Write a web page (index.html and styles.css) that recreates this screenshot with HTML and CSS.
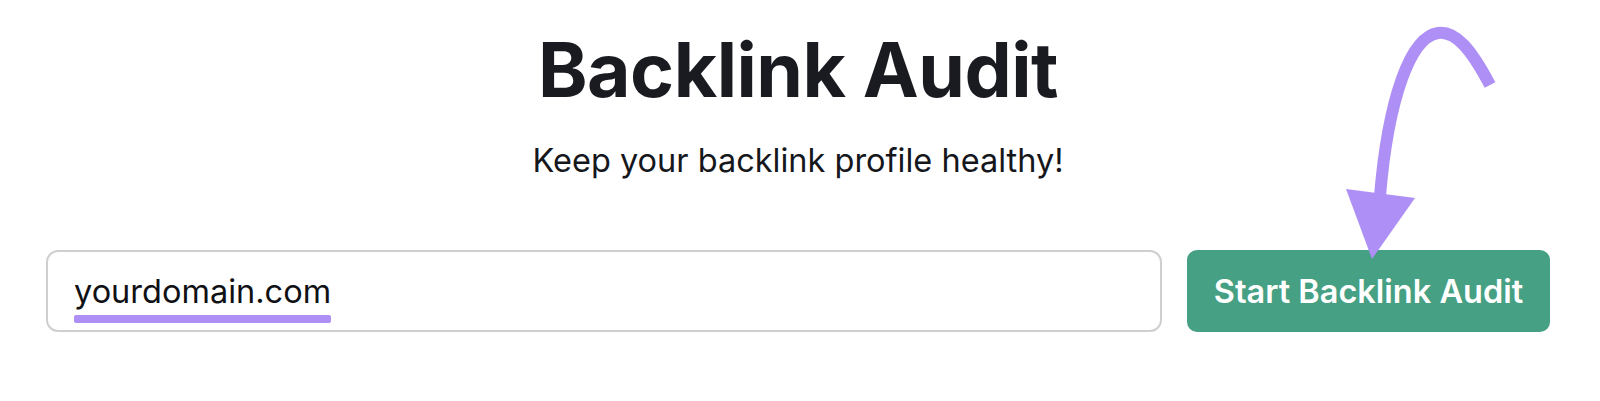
FILE: index.html
```html
<!DOCTYPE html>
<html lang="en">
<head>
<meta charset="utf-8">
<title>Backlink Audit</title>
<link rel="stylesheet" href="styles.css">
</head>
<body>
<main class="page">
  <h1 class="title">Backlink Audit</h1>
  <p class="subtitle">Keep your backlink profile healthy!</p>
  <div class="form-row">
    <div class="field">
      <div class="value">
        <span class="value-text">yourdomain.com</span>
        <span class="value-mark"></span>
      </div>
    </div>
    <button class="btn" type="button">Start Backlink Audit</button>
  </div>
  <svg class="arrow" width="1600" height="401" viewBox="0 0 1600 401" aria-hidden="true">
    <path d="M1490 85 C1471 49 1456 31 1438 33 C1410 37 1388 100 1380 196" fill="none" stroke="#ae8ff5" stroke-width="12" stroke-linecap="butt"/>
    <polygon points="1346,189 1415,198 1372,259" fill="#ae8ff5"/>
  </svg>
</main>
</body>
</html>
```
FILE: styles.css
```css
* { box-sizing: border-box; }
html, body { margin: 0; padding: 0; background: #ffffff; }
body {
  font-family: Inter, "Noto Sans", "Liberation Sans", sans-serif;
  color: #181a1f;
  width: 1600px;
  height: 401px;
  overflow: hidden;
}
.page {
  position: relative;
  display: flex;
  flex-direction: column;
  align-items: center;
  padding: 32px 50px 0 46px;
  height: 401px;
}
.title {
  margin: 0;
  font-size: 75px;
  line-height: 75px;
  font-weight: 700;
  letter-spacing: -0.5px;
  color: #191b21;
}
.subtitle {
  margin: 39px 0 0 0;
  font-size: 32.5px;
  line-height: 30px;
  font-weight: 400;
  color: #15171c;
}
.form-row {
  align-self: stretch;
  display: flex;
  gap: 25px;
  margin-top: 74px;
  height: 82px;
}
.field {
  flex: 1;
  border: 2px solid #cfcfd2;
  border-radius: 12px;
  display: flex;
  align-items: flex-start;
  padding: 22px 0 0 26px;
}
.value {
  display: flex;
  flex-direction: column;
  align-items: stretch;
}
.value-text {
  font-size: 32.5px;
  line-height: 36px;
  color: #101114;
}
.value-mark {
  height: 8px;
  margin-top: 5px;
  background: #ae8ff5;
  border-radius: 2px;
}
.btn {
  width: 363px;
  border: 0;
  border-radius: 10px;
  background: #46a083;
  color: #ffffff;
  font-family: Inter, "Noto Sans", "Liberation Sans", sans-serif;
  font-size: 32.5px;
  font-weight: 600;
  padding: 0;
}
.arrow {
  position: absolute;
  left: 0;
  top: 0;
  pointer-events: none;
}
```
